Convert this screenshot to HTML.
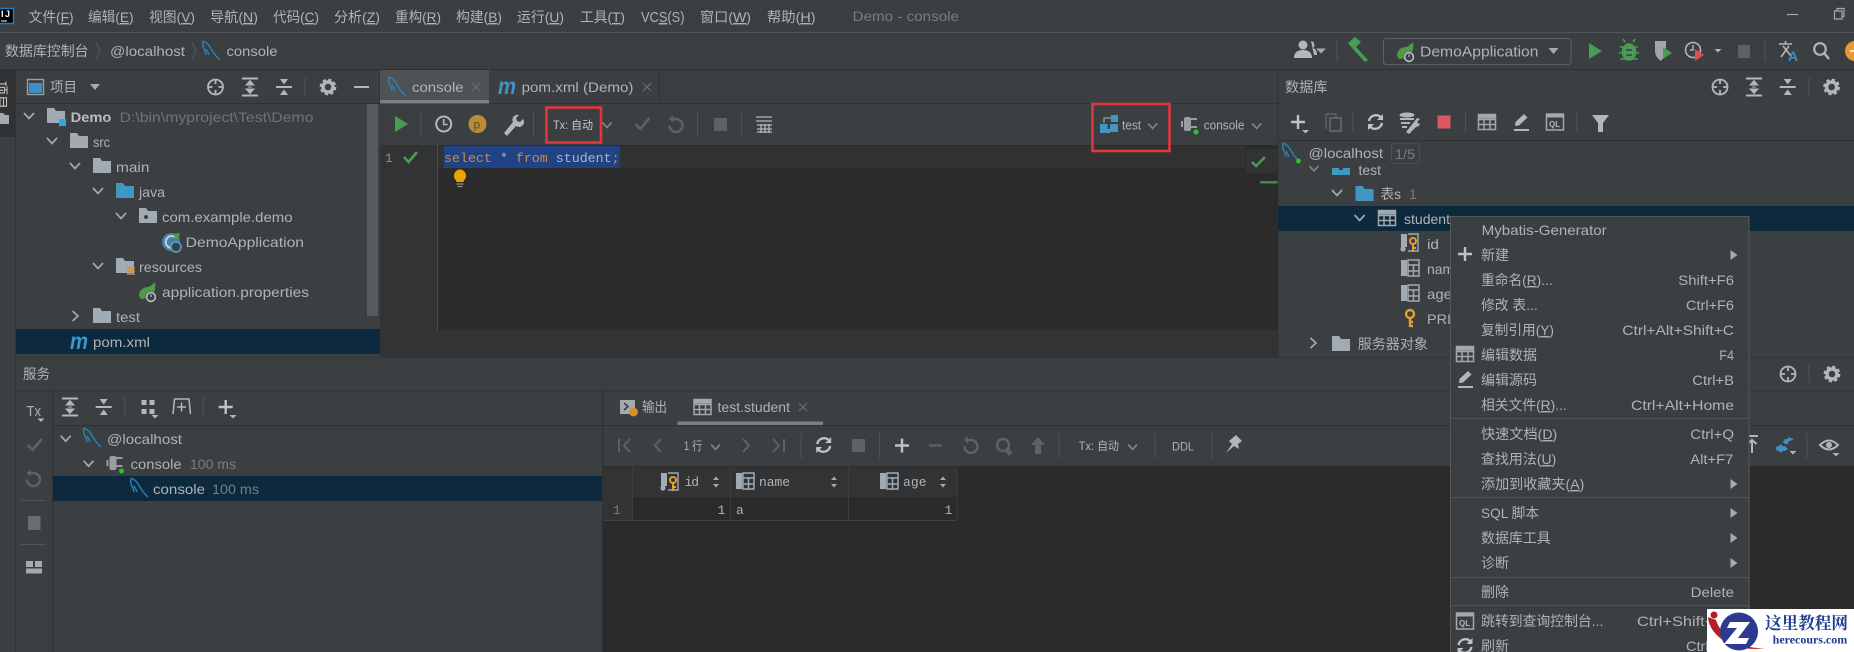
<!DOCTYPE html>
<html><head><meta charset="utf-8"><title>Demo - console</title>
<style>
html,body{margin:0;padding:0;background:#3c3f41;width:1854px;height:652px;overflow:hidden}
svg{display:block}
text{font-family:"Liberation Sans","Noto Sans CJK SC",sans-serif;font-size:14px;fill:#b0b3b5;white-space:pre}
.mono{font-family:"Liberation Mono","DejaVu Sans Mono",monospace}
.g{fill:#7a7d7f}
.u{text-decoration:underline}
.ln{stroke:#2f3133;stroke-width:1}
.sep{stroke:#515456;stroke-width:1}
</style></head><body>
<svg width="1854" height="652" viewBox="0 0 1854 652" xmlns="http://www.w3.org/2000/svg">
<defs>
<g id="chd"><path d="M-5,-3 L0,2.5 L5,-3" fill="none" stroke="#a7aaac" stroke-width="1.7"/></g>
<g id="chdim"><path d="M-4.5,-2.5 L0,2.5 L4.5,-2.5" fill="none" stroke="#7f8284" stroke-width="1.7"/></g>
<g id="chr"><path d="M-2.5,-5 L3,0 L-2.5,5" fill="none" stroke="#a7aaac" stroke-width="1.7"/></g>
<g id="fold"><path d="M-9,-8 h7 l2,3 h9 v12 h-18z" fill="#a0abb3"/></g>
<g id="foldb"><path d="M-9,-8 h7 l2,3 h9 v12 h-18z" fill="#3f97c2"/></g>
<g id="dol"><path d="M-8,-10 C-6,-9 -3,-8 -1,-4 C1,-1 2,2 6,6 L9,9 M-8,-10 C-9,-6 -8,-3 -6,0 L-5,4 M-5,-2 C-4,0 -3,1 -2,4" fill="none" stroke="#2c82b4" stroke-width="1.4"/></g>
<g id="target"><circle r="7.5" fill="none" stroke="#b4b7b9" stroke-width="1.8"/><path d="M0,-8 v5 M0,3 v5 M-8,0 h5 M3,0 h5" stroke="#b4b7b9" stroke-width="1.8"/></g>
<g id="expand"><path d="M-8,-8.5 h16 M-8,8.5 h16" stroke="#b4b7b9" stroke-width="2"/><path d="M0,-6.5 l-4,4.5 h8z M0,6.5 l-4,-4.5 h8z M-2,0 h4" fill="#b4b7b9" stroke="#b4b7b9"/></g>
<g id="collapse"><path d="M-8,0 h16" stroke="#b4b7b9" stroke-width="2"/><path d="M-4,-8 h8 l-4,5.5z M-4,8 h8 l-4,-5.5z" fill="#b4b7b9"/></g>
<g id="gear"><circle r="5" fill="none" stroke="#b4b7b9" stroke-width="3.4"/><circle r="7.2" fill="none" stroke="#b4b7b9" stroke-width="2.4" stroke-dasharray="3.2 2.45"/></g>
<g id="tbl"><path d="M-8.5,-7.5 h17 v15 h-17z M-8.5,-2.5 h17 M-8.5,2.5 h17 M-3,-2.5 v10 M3,-2.5 v10" fill="none" stroke="#a3a8ab" stroke-width="1.5"/><rect x="-8.5" y="-7.5" width="17" height="4" fill="#a3a8ab"/></g>
<g id="col"><rect x="-9" y="-8" width="6" height="16" fill="#a0abb3"/><path d="M-2,-8 h11 v16 h-11z M-2,-3 h11 M-2,3 h11 M3.5,-3 v11" fill="none" stroke="#a0abb3" stroke-width="1.5"/></g>
<g id="key"><circle cx="0" cy="-4" r="4" fill="none" stroke="#e0a030" stroke-width="2.4"/><path d="M0,0 v9 M0,4 h3 M0,8 h3" stroke="#e0a030" stroke-width="2.4"/></g>
<g id="idc"><rect x="-9" y="-9" width="6" height="13" fill="#a0abb3"/><circle cx="-7" cy="6" r="2.6" fill="#a0abb3"/><path d="M-2,-9 h10 v17 h-10" fill="none" stroke="#a0abb3" stroke-width="1.4"/><circle cx="3" cy="-2" r="3" fill="none" stroke="#e0a030" stroke-width="2"/><path d="M3,1 v8 M3,5 h3" stroke="#e0a030" stroke-width="2"/></g>
<g id="plus"><path d="M-7,0 h14 M0,-7 v14" stroke="#c0c3c5" stroke-width="2.4"/></g>
<g id="smtri"><path d="M-3.5,0 h7 l-3.5,3.5z" fill="#b4b7b9"/></g>
<g id="darr"><path d="M-5,-2.5 h10 l-5,5z" fill="#a7aaac"/></g>
<g id="rtri"><path d="M-3,-5 l7,5 l-7,5z" fill="#a7aaac"/></g>
<g id="play"><path d="M-6,-8 L7,0 L-6,8z" fill="#499c54"/></g>
<g id="stop"><rect x="-6" y="-6" width="13" height="13" fill="#5f6264"/></g>
<g id="undo"><path d="M-5,-6 h5 a6.5,6.5 0 1 1 -6.5,6.5" fill="none" stroke="#5f6264" stroke-width="2.4"/><path d="M-7,-6 l4,-3.5 v7z" fill="#5f6264"/></g>
<g id="check"><path d="M-7,0 L-2,5 L7,-6" fill="none" stroke="#5f6264" stroke-width="2.6"/></g>
<g id="refresh"><path d="M6,-4 A7,7 0 0 0 -6.5,-1 M-6,4 A7,7 0 0 0 6.5,1" fill="none" stroke="#c0c3c5" stroke-width="2.4"/><path d="M7.5,-8 v6 h-6z M-7.5,8 v-6 h6z" fill="#c0c3c5"/></g>
<g id="edit"><path d="M-7,8 h15" stroke="#b4b7b9" stroke-width="2"/><path d="M-6,4 L-5.5,0 L3,-8 L6.5,-4.5 L-2,3.5z" fill="#b4b7b9"/></g>
<g id="ql"><rect x="-8.5" y="-8" width="17" height="16" fill="none" stroke="#a3a8ab" stroke-width="1.5"/><rect x="-8.5" y="-8" width="17" height="3.5" fill="#a3a8ab"/><text x="-6" y="5" style="font-size:8px;fill:#b4b7b9;font-weight:bold">QL</text></g>
<g id="spring"><path d="M-9,4 C-9,-3 -3,-5 0,-5 C3,-6 5,-8 7,-10 C8,-3 6,3 1,6 L-7,7z" fill="#4f9a44"/><circle cx="3" cy="5" r="5.5" fill="#3c3f41"/><circle cx="3" cy="5" r="4.4" fill="none" stroke="#b4c0c8" stroke-width="1.6"/><path d="M3,2.5 v2.5" stroke="#b4c0c8" stroke-width="1.2"/></g>
<g id="conn"><path d="M-8,-3 v6" stroke="#9a9ea1" stroke-width="2"/><rect x="-6" y="-7" width="7" height="14" rx="2" fill="#9a9ea1"/><path d="M1,-5 h6 M1,3 h6" stroke="#9a9ea1" stroke-width="2"/><circle cx="6" cy="8" r="2.5" fill="#2fc22f"/></g>
<g id="mvn"><text x="-9" y="7" style="font:italic bold 23px 'Liberation Sans';fill:#3d96c8" textLength="18" lengthAdjust="spacingAndGlyphs">m</text></g>
</defs>

<rect width="1854" height="652" fill="#3c3f41"/>

<!-- top menu bar -->
<path d="M0,32.5 H1854" stroke="#525557"/>
<rect x="0" y="8" width="14" height="16" fill="#000"/><path d="M0,8.5 H13.5 V23.5 H0" fill="none" stroke="#1e7ec8" stroke-width="1.4"/>
<text x="1" y="17" style="font-size:9px;font-weight:bold;fill:#fff" textLength="9">IJ</text><path d="M1,21 h6" stroke="#fff"/>
<text x="28.6" y="22" textLength="45" lengthAdjust="spacingAndGlyphs">文件(<tspan class="u">F</tspan>)</text>
<text x="88" y="22" textLength="45.5" lengthAdjust="spacingAndGlyphs">编辑(<tspan class="u">E</tspan>)</text>
<text x="149" y="22" textLength="46" lengthAdjust="spacingAndGlyphs">视图(<tspan class="u">V</tspan>)</text>
<text x="210" y="22" textLength="48" lengthAdjust="spacingAndGlyphs">导航(<tspan class="u">N</tspan>)</text>
<text x="273" y="22" textLength="46" lengthAdjust="spacingAndGlyphs">代码(<tspan class="u">C</tspan>)</text>
<text x="334" y="22" textLength="46" lengthAdjust="spacingAndGlyphs">分析(<tspan class="u">Z</tspan>)</text>
<text x="395" y="22" textLength="46" lengthAdjust="spacingAndGlyphs">重构(<tspan class="u">R</tspan>)</text>
<text x="456" y="22" textLength="46" lengthAdjust="spacingAndGlyphs">构建(<tspan class="u">B</tspan>)</text>
<text x="517" y="22" textLength="47" lengthAdjust="spacingAndGlyphs">运行(<tspan class="u">U</tspan>)</text>
<text x="580" y="22" textLength="45" lengthAdjust="spacingAndGlyphs">工具(<tspan class="u">T</tspan>)</text>
<text x="641" y="22" textLength="43.5" lengthAdjust="spacingAndGlyphs" style="font-size:15px">VC<tspan class="u">S</tspan>(S)</text>
<text x="700" y="22" textLength="51" lengthAdjust="spacingAndGlyphs">窗口(<tspan class="u">W</tspan>)</text>
<text x="767" y="22" textLength="48.5" lengthAdjust="spacingAndGlyphs">帮助(<tspan class="u">H</tspan>)</text>
<text x="852.6" y="21" class="g" textLength="106.4" lengthAdjust="spacingAndGlyphs">Demo - console</text>
<path d="M1787,14.5 h11" stroke="#a7aaac" stroke-width="1.2"/>
<path d="M1834.5,11 h7.5 v8 h-7.5z M1837,11 v-2.5 h7 v8 h-2" fill="none" stroke="#a7aaac" stroke-width="1.2"/>

<!-- breadcrumb bar -->
<path d="M0,69.5 H1854" stroke="#2f3133"/>
<text x="5" y="56" textLength="83.6" lengthAdjust="spacingAndGlyphs">数据库控制台</text>
<path d="M96,42 L100,51 L96,60" fill="none" stroke="#56595b"/>
<text x="110" y="56" textLength="75" lengthAdjust="spacingAndGlyphs">@localhost</text>
<path d="M192,42 L196,51 L192,60" fill="none" stroke="#56595b"/>
<use href="#dol" x="211" y="51"/>
<text x="226.5" y="56" textLength="51" lengthAdjust="spacingAndGlyphs">console</text>

<!-- top right toolbar -->
<g fill="#b4b7b9"><circle cx="1303" cy="45" r="4.5"/><path d="M1294,58 c0,-6 4,-8 9,-8 s9,2 9,8z"/><path d="M1311,41 a4,4 0 0 1 2,7 c3,1 4,4 4,7 h-3"/></g>
<use href="#darr" x="1321" y="51"/>
<path class="sep" d="M1337,40 V62"/>
<path d="M1348,43 L1355,37 L1361,42 L1356,47 L1368,60 L1365,62 L1353,49z" fill="#499c54"/>
<rect x="1383.5" y="38.5" width="187.5" height="26" rx="3" fill="none" stroke="#5e6163"/>
<use href="#spring" x="1406" y="52"/>
<text x="1420" y="56.5" textLength="118.5" lengthAdjust="spacingAndGlyphs" style="font-size:15px">DemoApplication</text>
<path d="M1548.5,48 h10 l-5,6z" fill="#a7aaac"/>
<use href="#play" x="1595" y="51"/>
<g stroke="#499c54" stroke-width="1.6"><ellipse cx="1629" cy="52" rx="6.5" ry="8" fill="#499c54"/><path d="M1620,47 h18 M1619,53 h20 M1620,59 h18 M1625,42 l-2,-3 M1633,42 l2,-3" fill="none"/><path d="M1626,50 h6 M1626,55 h6" stroke="#3c3f41"/></g>
<path d="M1655,41 h11 v13 l-5,7 q-6,-4 -6,-10z" fill="#a0a5a8"/><path d="M1663,47 l9,6 l-9,6z" fill="#499c54"/>
<circle cx="1693" cy="50" r="7.5" fill="none" stroke="#b4b7b9" stroke-width="1.6"/><path d="M1693,45 v5 h-3" fill="none" stroke="#b4b7b9" stroke-width="1.4"/><path d="M1695,49 l9,6 l-9,6z" fill="#d9504f"/>
<use href="#smtri" x="1718" y="49"/>
<rect x="1738" y="45" width="12" height="13" fill="#5f6264"/>
<path class="sep" d="M1765,40 V62"/>
<path d="M1779,44 h13 M1785.5,41 v3 M1781,57 L1789,46 M1783,46 L1791,56" fill="none" stroke="#b4b7b9" stroke-width="1.6"/>
<text x="1788" y="61" style="font-size:14px;font-weight:bold;fill:#3d8ec2">A</text>
<circle cx="1820" cy="49" r="5.8" fill="none" stroke="#b4b7b9" stroke-width="2.2"/><path d="M1824.5,53.5 L1829,59" stroke="#b4b7b9" stroke-width="2.4"/>
<circle cx="1855" cy="51" r="10" fill="#e9982b"/><path d="M1850,51 h5" stroke="#fff" stroke-width="1.5"/>

<!-- left strip -->
<rect x="0" y="70" width="15" height="582" fill="#3c3f41"/>
<rect x="0" y="70" width="15" height="67" fill="#303234"/>
<path d="M15.5,70 V652" stroke="#323436"/>
<text transform="translate(-4,81) rotate(90)" x="0" y="0" style="font-size:14px;fill:#c4c7c9" textLength="28">项目</text>
<path d="M0,113 h3 l2,2 h4 v9 h-9z" fill="#a0abb3"/>

<!-- project panel -->
<path d="M16,103.5 H380" class="ln"/>
<rect x="27.5" y="79.5" width="16" height="15" fill="none" stroke="#9aa0a4" stroke-width="1.4"/><rect x="29" y="83" width="13" height="10" fill="#3d8ec2"/>
<text x="50" y="92" textLength="27" lengthAdjust="spacingAndGlyphs">项目</text>
<path d="M90,84 h10 l-5,6z" fill="#a7aaac"/>
<use href="#target" x="215.5" y="87"/><use href="#expand" x="250" y="87"/><use href="#collapse" x="284" y="87"/>
<path class="sep" d="M305,78 V96"/>
<use href="#gear" x="328" y="87"/>
<path d="M354,87 h15" stroke="#b4b7b9" stroke-width="2"/>

<!-- project tree -->
<rect x="16" y="329" width="364" height="25" fill="#0d293e"/>
<rect x="367" y="104" width="11" height="212" fill="#585b5d"/>
<use href="#chd" x="29" y="116"/><use href="#chd" x="52" y="141"/><use href="#chd" x="75" y="166"/><use href="#chd" x="98" y="191"/><use href="#chd" x="121" y="216"/><use href="#chd" x="98" y="266"/><use href="#chr" x="75" y="316"/>
<use href="#fold" x="56" y="116"/><rect x="59" y="119" width="7" height="7" fill="#2fa8e0"/>
<use href="#fold" x="79" y="141"/><use href="#fold" x="102" y="166"/><use href="#foldb" x="125" y="191"/>
<use href="#fold" x="148" y="216"/><circle cx="146" cy="217" r="2" fill="#3c3f41"/>
<circle cx="171" cy="242" r="9" fill="#3f83ad"/><path d="M175,237 a6,6 0 1 0 0,10" fill="none" stroke="#ccc" stroke-width="2"/><path d="M172,234 l8,-1 l-2,7z" fill="#4f9a44"/><circle cx="176" cy="247" r="5" fill="#3c3f41" stroke="#4da3cf" stroke-width="1.5"/>
<use href="#fold" x="125" y="266"/><path d="M127,268 h8 M127,271 h8 M127,274 h8" stroke="#d88e24" stroke-width="1.6"/>
<use href="#spring" x="148" y="292"/>
<use href="#fold" x="102" y="316"/>
<use href="#mvn" x="79" y="342"/>
<text x="70.6" y="122" style="font-weight:bold;fill:#bbb" textLength="40.8" lengthAdjust="spacingAndGlyphs">Demo</text>
<text x="119.6" y="122" class="g" fill-opacity=".85" textLength="193.9" lengthAdjust="spacingAndGlyphs">D:\bin\myproject\Test\Demo</text>
<text x="93" y="147" textLength="17" lengthAdjust="spacingAndGlyphs">src</text>
<text x="116" y="172" textLength="33.4" lengthAdjust="spacingAndGlyphs">main</text>
<text x="139" y="197" textLength="26" lengthAdjust="spacingAndGlyphs">java</text>
<text x="162" y="222" textLength="130.6" lengthAdjust="spacingAndGlyphs">com.example.demo</text>
<text x="185.7" y="247" textLength="118.3" lengthAdjust="spacingAndGlyphs">DemoApplication</text>
<text x="139" y="272" textLength="63" lengthAdjust="spacingAndGlyphs">resources</text>
<text x="162" y="297" textLength="147" lengthAdjust="spacingAndGlyphs">application.properties</text>
<text x="116" y="322" textLength="24" lengthAdjust="spacingAndGlyphs">test</text>
<text x="93" y="347" textLength="57" lengthAdjust="spacingAndGlyphs">pom.xml</text>

<!-- editor tabs -->
<path d="M380,70 V103" class="ln"/>
<path d="M380,103.5 H1278" class="ln"/>
<rect x="380" y="70" width="109" height="33" fill="#4e5254"/>
<rect x="380" y="100" width="109" height="3.5" fill="#7d8082"/>
<use href="#dol" x="397" y="87"/>
<text x="412" y="92" textLength="51.6" lengthAdjust="spacingAndGlyphs">console</text>
<path d="M472,83 l8,8 M480,83 l-8,8" stroke="#6b6e70" stroke-width="1.2"/>
<use href="#mvn" x="507" y="87"/>
<text x="521.6" y="92" textLength="111.9" lengthAdjust="spacingAndGlyphs">pom.xml (Demo)</text>
<path d="M643,83 l8,8 M651,83 l-8,8" stroke="#6b6e70" stroke-width="1.2"/>
<path d="M659.5,70 V103" class="ln"/>

<!-- editor toolbar -->
<use href="#play" x="401" y="124"/>
<path class="sep" d="M421,112 V137"/>
<circle cx="443.7" cy="124" r="7.5" fill="none" stroke="#b4b7b9" stroke-width="2"/><path d="M443.7,119 v5.5 h4" fill="none" stroke="#b4b7b9" stroke-width="1.6"/>
<circle cx="477.5" cy="124" r="9" fill="#b98b3a"/><text x="473.5" y="128.5" style="font-size:12px;fill:#5a4a26" textLength="8">p</text>
<path d="M504,133 L513,122 a5,5 0 0 1 6,-7 l-3,3 l1,3 l3,1 l3,-3 a5,5 0 0 1 -7,7 L507,136z" fill="#b4b7b9"/>
<path class="sep" d="M533.5,112 V137"/>
<text x="553" y="129" style="font-size:11.5px;fill:#c4c7c9" textLength="40" lengthAdjust="spacingAndGlyphs">Tx: 自动</text>
<use href="#chdim" x="607" y="125"/>
<use href="#check" x="642.4" y="124"/>
<use href="#undo" x="676" y="125"/>
<path class="sep" d="M697.5,112 V137"/>
<use href="#stop" x="720" y="124"/>
<path class="sep" d="M741.6,112 V137"/>
<path d="M756,117 h16 M756,121 h16 M757,125 h15 M757,129 h15 M757,132 h15 M761,124 v9 M765,124 v9 M769,124 v9" stroke="#b4b7b9" stroke-width="1.3" fill="none"/>
<rect x="1100" y="124" width="7.5" height="7.5" fill="#3f97c2"/><rect x="1110" y="124" width="8" height="8" fill="#3f97c2"/><rect x="1111" y="115" width="7" height="7" fill="#3f97c2"/><rect x="1100" y="129" width="10" height="4" fill="#3f97c2"/><path d="M1104,123 v-5 h7" fill="none" stroke="#b4b7b9"/>
<text x="1122" y="129.5" style="font-size:13px" textLength="19" lengthAdjust="spacingAndGlyphs">test</text>
<use href="#chdim" x="1152.6" y="126"/>
<use href="#conn" x="1190" y="124"/>
<text x="1203.7" y="129.5" style="font-size:13px" textLength="40.8" lengthAdjust="spacingAndGlyphs">console</text>
<use href="#chdim" x="1256.7" y="126"/>

<!-- editor -->
<rect x="380" y="145" width="898" height="185" fill="#2b2b2b"/>
<rect x="380" y="145" width="57" height="185" fill="#313335"/>
<path d="M437.5,145 V330" stroke="#4a4d4f"/>
<rect x="438" y="146" width="807" height="22" fill="#323232"/>
<rect x="444" y="146" width="175.6" height="22" fill="#214283"/>
<text x="385" y="162" class="mono" style="font-size:12.5px;fill:#8d9193">1</text>
<path d="M404,157 L408.5,162 L417,152" fill="none" stroke="#499c54" stroke-width="2.6"/>
<text x="444" y="162" class="mono" style="font-size:13.3px" textLength="175.6" lengthAdjust="spacingAndGlyphs"><tspan style="fill:#cc8a4a">select</tspan> <tspan style="fill:#a9b7c6">*</tspan> <tspan style="fill:#cc8a4a">from</tspan> <tspan style="fill:#a9b7c6">student</tspan><tspan style="fill:#cc8a4a">;</tspan></text>
<path d="M454,176 a6,6.5 0 1 1 12,0 c0,3 -2,3.5 -2.5,6 h-7 c-.5,-2.5 -2.5,-3 -2.5,-6z" fill="#eda200"/><path d="M456.5,184 h7 M457.5,186.5 h5" stroke="#9c8f7a" stroke-width="1.3"/>
<rect x="1245" y="146" width="33" height="184" fill="#2b2b2b"/>
<rect x="1246" y="149" width="32" height="24" fill="#313335"/>
<path d="M1252,162 L1256,166 L1265,157" fill="none" stroke="#499c54" stroke-width="2.4"/>
<rect x="1260" y="181" width="18" height="2.5" fill="#3a8f3f"/>
<rect x="380" y="330" width="898" height="27" fill="#313335"/>
<path d="M16,357.5 H1854" stroke="#323436"/>

<!-- red annotation boxes -->
<rect x="546.5" y="107.5" width="54.5" height="35" fill="none" stroke="#e2363f" stroke-width="2.6"/>
<rect x="1092.5" y="104" width="77" height="47" fill="none" stroke="#e2363f" stroke-width="2.6"/>

<!-- database panel -->
<path d="M1278,70 V357" class="ln"/>
<text x="1285" y="92" textLength="42.5" lengthAdjust="spacingAndGlyphs">数据库</text>
<use href="#target" x="1720" y="87"/><use href="#expand" x="1754" y="87"/><use href="#collapse" x="1787.7" y="87"/>
<path class="sep" d="M1809,78 V96"/>
<use href="#gear" x="1831.6" y="87"/>
<path d="M1278,140.5 H1854" class="ln"/>
<use href="#plus" x="1298" y="122"/><use href="#smtri" x="1305.5" y="130"/>
<path d="M1326,114 h10 v3 M1326,114 v15" fill="none" stroke="#5f6264" stroke-width="1.5"/><rect x="1330" y="118" width="11" height="13" fill="none" stroke="#5f6264" stroke-width="2"/>
<path class="sep" d="M1353,112 V133"/>
<use href="#refresh" x="1375.5" y="122"/>
<ellipse cx="1407" cy="115" rx="7.5" ry="2.5" fill="#b4b7b9"/><path d="M1400,119 h14 M1401,123 h9 M1402,127 h5" stroke="#b4b7b9" stroke-width="2"/><path d="M1406,132 L1414,122 l3,-4 l3,1 l-3,3 l2,2 l1,-1 l-1,3 l-3,1 L1409,134z" fill="#b4b7b9"/>
<rect x="1437.5" y="115.5" width="13" height="13" fill="#db5860"/>
<path class="sep" d="M1465.5,112 V133"/>
<use href="#tbl" x="1487" y="122"/>
<use href="#edit" x="1521" y="122"/>
<use href="#ql" x="1555" y="122"/>
<path class="sep" d="M1577,112 V133"/>
<path d="M1592,115 h17 l-6,8 v9 h-5 v-9z" fill="#b4b7b9"/>

<!-- database tree -->
<rect x="1278" y="206" width="576" height="25" fill="#0d293e"/>
<use href="#chdim" x="1314" y="168.5"/><path d="M1332,168 h7 v2 h4 v-2 h7 v7 h-18z" fill="#3f97c2"/>
<text x="1358.5" y="175" textLength="22.5" lengthAdjust="spacingAndGlyphs">test</text>
<rect x="1279" y="141" width="575" height="24.5" fill="#3c3f41"/>
<path d="M1278,141 V166" class="ln"/>
<use href="#dol" x="1291" y="153"/><circle cx="1298.5" cy="161" r="2.4" fill="#2fc22f"/>
<text x="1308.5" y="158" textLength="74.5" lengthAdjust="spacingAndGlyphs">@localhost</text>
<rect x="1391.5" y="143.5" width="28" height="20" rx="3" fill="none" stroke="#4d5052"/>
<text x="1395" y="159" class="g" textLength="20" lengthAdjust="spacingAndGlyphs">1/5</text>
<use href="#chd" x="1337" y="193"/><use href="#foldb" x="1364.5" y="194"/>
<text x="1380.5" y="199" textLength="20.5" lengthAdjust="spacingAndGlyphs">表s</text>
<text x="1409" y="199" class="g">1</text>
<use href="#chd" x="1359.6" y="218"/><use href="#tbl" x="1387" y="218"/>
<text x="1404" y="224" textLength="46" lengthAdjust="spacingAndGlyphs">student</text>
<use href="#idc" x="1410" y="243"/><text x="1427" y="249" textLength="12" lengthAdjust="spacingAndGlyphs">id</text>
<use href="#col" x="1410" y="268"/><text x="1427" y="274" textLength="35" lengthAdjust="spacingAndGlyphs">name</text>
<use href="#col" x="1410" y="293"/><text x="1427" y="299" textLength="25" lengthAdjust="spacingAndGlyphs">age</text>
<use href="#key" x="1410" y="318"/><text x="1427" y="324" textLength="24" lengthAdjust="spacingAndGlyphs">PRI</text>
<use href="#chr" x="1313" y="343"/><use href="#fold" x="1341" y="344"/>
<text x="1357.7" y="349" textLength="70.3" lengthAdjust="spacingAndGlyphs">服务器对象</text>

<!-- services panel -->
<text x="23" y="379" textLength="27" lengthAdjust="spacingAndGlyphs">服务</text>
<path d="M16,391 H1854" class="ln"/>
<use href="#target" x="1788" y="374"/>
<path class="sep" d="M1809,365 V383"/>
<use href="#gear" x="1832" y="374"/>

<path d="M52.5,391 V652" class="ln"/>
<text x="26.5" y="416" textLength="14.5" lengthAdjust="spacingAndGlyphs" style="font-size:15px">Tx</text>
<use href="#smtri" x="41" y="418.5"/>
<use href="#check" x="34.7" y="445"/>
<use href="#undo" x="33.5" y="479"/>
<path class="sep" d="M21,500.5 H46"/>
<rect x="28" y="516" width="12.5" height="14" fill="#6a6d6f"/>
<path class="sep" d="M21,544.5 H46"/>
<path d="M26,561 h7 v6 h-7z M35,561 h7 v6 h-7z M26,568.5 h16 v5 h-16z" fill="#a7aaac"/>

<path d="M53,425.5 H602" class="ln"/>
<use href="#expand" x="70" y="407"/><use href="#collapse" x="103.7" y="407"/>
<path class="sep" d="M125,397 V417"/>
<path d="M141.5,400 h5 v5 h-5z M149.5,400 h5 v5 h-5z M141.5,409 h5 v5 h-5z M149.5,409 h5 v5 h-5z" fill="#b4b7b9"/><use href="#smtri" x="155" y="415"/>
<path d="M173,414 L174.5,399 H189 L190.5,414" fill="none" stroke="#b4b7b9" stroke-width="1.5"/><path d="M177,407 h9 M181.5,402.5 v9" stroke="#b4b7b9" stroke-width="1.5"/>
<path class="sep" d="M203,397 V417"/>
<use href="#plus" x="225.7" y="407"/><use href="#smtri" x="233" y="415"/>

<rect x="53" y="476" width="549" height="25" fill="#0d293e"/>
<use href="#chd" x="65.7" y="438.7"/><use href="#dol" x="92" y="438"/>
<text x="107" y="444" textLength="75" lengthAdjust="spacingAndGlyphs">@localhost</text>
<use href="#chd" x="88.6" y="463.7"/><use href="#conn" x="115.5" y="463"/>
<text x="130.6" y="469" textLength="51" lengthAdjust="spacingAndGlyphs">console</text>
<text x="190" y="469" class="g" textLength="46" lengthAdjust="spacingAndGlyphs">100 ms</text>
<use href="#dol" x="139" y="488"/>
<text x="153" y="494" textLength="52" lengthAdjust="spacingAndGlyphs">console</text>
<text x="212" y="494" class="g" textLength="47" lengthAdjust="spacingAndGlyphs">100 ms</text>

<!-- results pane -->
<path d="M602.5,391 V652" class="ln"/>
<path d="M603,425.5 H1854" class="ln"/>
<rect x="620" y="400" width="15" height="14" fill="#a7aaac"/><path d="M624,403 l4,3.5 l-4,3.5" fill="none" stroke="#3c3f41" stroke-width="1.6"/><circle cx="633.5" cy="412" r="4.4" fill="#d6902a"/>
<text x="642" y="412" textLength="25" lengthAdjust="spacingAndGlyphs">输出</text>
<use href="#tbl" x="702.5" y="407"/>
<text x="717.5" y="412" textLength="72.5" lengthAdjust="spacingAndGlyphs">test.student</text>
<path d="M799,403 l8,8 M807,403 l-8,8" stroke="#6b6e70" stroke-width="1.2"/>
<rect x="677.5" y="421.5" width="145.5" height="3.5" fill="#7d8082"/>

<path d="M619,439 v13 M630,439 l-6,6.5 l6,6.5" fill="none" stroke="#5f6264" stroke-width="2"/>
<path d="M661,439 l-6,6.5 l6,6.5" fill="none" stroke="#5f6264" stroke-width="2"/>
<text x="683.7" y="450" style="font-size:12px" textLength="18.5" lengthAdjust="spacingAndGlyphs">1 行</text>
<use href="#chdim" x="715.5" y="447"/>
<path d="M743,439 l6,6.5 l-6,6.5" fill="none" stroke="#5f6264" stroke-width="2"/>
<path d="M773,439 l6,6.5 l-6,6.5 M784,439 v13" fill="none" stroke="#5f6264" stroke-width="2"/>
<path class="sep" d="M801,433 V458"/>
<use href="#refresh" x="823.7" y="445"/>
<use href="#stop" x="858" y="445"/>
<path class="sep" d="M879.6,433 V458"/>
<use href="#plus" x="902" y="445.5"/>
<path d="M929,445.5 h13" stroke="#5f6264" stroke-width="2.4"/>
<use href="#undo" x="971" y="446"/>
<circle cx="1003" cy="445" r="6" fill="none" stroke="#5f6264" stroke-width="2.4"/><path d="M1006,448 l4,-1 v4 h3 l-4,5 l-4,-5z" fill="#5f6264"/>
<path d="M1038,437 l7,8 h-4 v9 h-6 v-9 h-4z" fill="#5f6264"/>
<path class="sep" d="M1059,433 V458"/>
<text x="1078.8" y="450" style="font-size:12px" textLength="40.2" lengthAdjust="spacingAndGlyphs">Tx: 自动</text>
<use href="#chdim" x="1132.6" y="447"/>
<path class="sep" d="M1155,433 V458"/>
<text x="1172" y="450.5" style="font-size:12px" textLength="22" lengthAdjust="spacingAndGlyphs">DDL</text>
<path class="sep" d="M1212,433 V458"/>
<path d="M1226,453 L1232,444 L1229,441 L1236,435 L1242,441 L1238,444 L1239,449 L1234,446z" fill="#b4b7b9"/>
<path d="M1746,436 h12 M1752,440 v13 M1747.5,444 l4.5,-4 l4.5,4" fill="none" stroke="#b4b7b9" stroke-width="2"/>
<path d="M1776,447 l6,-3 v2 h3 l3,3 l-3,2 h-3 v2 l-6,-3z M1794,439 l-6,3 v2 h-3 l-2,-2 l2,-3 h3 v-2z" fill="#3d8ec2"/><use href="#smtri" x="1793" y="451"/>
<path class="sep" d="M1807,433 V458"/>
<path d="M1820,445 q9,-9 18,0 q-9,9 -18,0z" fill="none" stroke="#b4b7b9" stroke-width="2"/><circle cx="1829" cy="445" r="3" fill="#b4b7b9"/><use href="#smtri" x="1836" y="453"/>

<rect x="603" y="466" width="1251" height="186" fill="#2b2b2b"/>
<rect x="603" y="467" width="354" height="30" fill="#313335"/>
<rect x="603" y="497" width="29" height="23" fill="#313335"/>
<path d="M632.5,467 V520 M730.5,467 V520 M848.5,467 V520 M957,467 V520" stroke="#3a3c3e"/>
<path d="M603,520.5 H957" stroke="#3f4143"/>
<use href="#idc" x="670" y="482"/>
<text x="684.5" y="486" class="mono" style="font-size:13px" textLength="14.5">id</text>
<path d="M713,480 l3,-3.5 l3,3.5z M713,484 l3,3.5 l3,-3.5z" fill="#a7aaac"/>
<use href="#col" x="745" y="481"/>
<text x="759" y="486" class="mono" style="font-size:13px" textLength="31">name</text>
<path d="M831,480 l3,-3.5 l3,3.5z M831,484 l3,3.5 l3,-3.5z" fill="#a7aaac"/>
<use href="#col" x="889" y="481"/>
<text x="903" y="486" class="mono" style="font-size:13px" textLength="23.5">age</text>
<path d="M940,480 l3,-3.5 l3,3.5z M940,484 l3,3.5 l3,-3.5z" fill="#a7aaac"/>
<text x="613" y="514" class="mono g" style="font-size:13px">1</text>
<text x="717.5" y="514" class="mono" style="font-size:13px">1</text>
<text x="736" y="514" class="mono" style="font-size:13px">a</text>
<text x="944.5" y="514" class="mono" style="font-size:13px">1</text>

<!-- context menu -->
<rect x="1450.5" y="216.5" width="298.5" height="436" fill="#3c3f41" stroke="#55585a"/>
<path d="M1451,418.5 H1749 M1451,497.5 H1749 M1451,577.5 H1749 M1451,605.5 H1749" stroke="#505355"/>
<text x="1481.7" y="235" textLength="125" lengthAdjust="spacingAndGlyphs">Mybatis-Generator</text>
<text x="1481" y="260" textLength="28">新建</text>
<text x="1481" y="285" textLength="71.7" lengthAdjust="spacingAndGlyphs">重命名(<tspan class="u">R</tspan>)...</text>
<text x="1481" y="310" textLength="56.7" lengthAdjust="spacingAndGlyphs">修改 表...</text>
<text x="1481" y="335" textLength="73" lengthAdjust="spacingAndGlyphs">复制引用(<tspan class="u">Y</tspan>)</text>
<text x="1481" y="360" textLength="56">编辑数据</text>
<text x="1481" y="385" textLength="56">编辑源码</text>
<text x="1481" y="410" textLength="85.7" lengthAdjust="spacingAndGlyphs">相关文件(<tspan class="u">R</tspan>)...</text>
<text x="1481" y="439" textLength="76.3" lengthAdjust="spacingAndGlyphs">快速文档(<tspan class="u">D</tspan>)</text>
<text x="1481" y="464" textLength="75.3" lengthAdjust="spacingAndGlyphs">查找用法(<tspan class="u">U</tspan>)</text>
<text x="1481" y="489" textLength="103.3" lengthAdjust="spacingAndGlyphs">添加到收藏夹(<tspan class="u">A</tspan>)</text>
<text x="1481" y="518" textLength="58" lengthAdjust="spacingAndGlyphs">SQL 脚本</text>
<text x="1481" y="543" textLength="69.7" lengthAdjust="spacingAndGlyphs">数据库工具</text>
<text x="1481" y="568" textLength="28">诊断</text>
<text x="1481" y="597" textLength="28">删除</text>
<text x="1481" y="626" textLength="122.3" lengthAdjust="spacingAndGlyphs">跳转到查询控制台...</text>
<text x="1481" y="651" textLength="28">刷新</text>
<text x="1678.3" y="285" textLength="55.7" lengthAdjust="spacingAndGlyphs">Shift+F6</text>
<text x="1686" y="310" textLength="48" lengthAdjust="spacingAndGlyphs">Ctrl+F6</text>
<text x="1622.3" y="335" textLength="111.7" lengthAdjust="spacingAndGlyphs">Ctrl+Alt+Shift+C</text>
<text x="1719.3" y="360" textLength="14.7" lengthAdjust="spacingAndGlyphs">F4</text>
<text x="1692.3" y="385" textLength="41.7" lengthAdjust="spacingAndGlyphs">Ctrl+B</text>
<text x="1631" y="410" textLength="103" lengthAdjust="spacingAndGlyphs">Ctrl+Alt+Home</text>
<text x="1690.3" y="439" textLength="43.7" lengthAdjust="spacingAndGlyphs">Ctrl+Q</text>
<text x="1690.3" y="464" textLength="43" lengthAdjust="spacingAndGlyphs">Alt+F7</text>
<text x="1690.7" y="597" textLength="43.3" lengthAdjust="spacingAndGlyphs">Delete</text>
<text x="1637" y="626" textLength="90" lengthAdjust="spacingAndGlyphs">Ctrl+Shift+Q</text>
<text x="1686" y="651" textLength="48" lengthAdjust="spacingAndGlyphs">Ctrl+F5</text>
<use href="#rtri" x="1733.5" y="255"/><use href="#rtri" x="1733.5" y="484"/><use href="#rtri" x="1733.5" y="513"/><use href="#rtri" x="1733.5" y="538"/><use href="#rtri" x="1733.5" y="563"/>
<use href="#plus" x="1465" y="254"/>
<use href="#tbl" x="1465" y="354"/>
<use href="#edit" x="1465" y="379"/>
<use href="#ql" x="1465" y="621"/>
<use href="#refresh" x="1465" y="646"/>

<!-- watermark -->
<rect x="1707" y="609" width="147" height="43" fill="#fff"/>
<path d="M1708,617 C1709,636 1734,653 1765,648 C1740,649 1722,638 1716,620z" fill="#b3202a"/>
<circle cx="1714" cy="615" r="3.5" fill="#b3202a"/>
<circle cx="1739" cy="631.5" r="19" fill="#2e3a92"/>
<path d="M1730,622 h20 l-12,16 h11 l-3,6 h-22 l13,-16 h-10z" fill="#fff"/>
<text x="1765" y="629" style="font-family:'Noto Serif CJK SC','Liberation Serif',serif;font-weight:bold;font-size:17px;fill:#1d3b8f" textLength="83" lengthAdjust="spacingAndGlyphs">这里教程网</text>
<text x="1772.7" y="643.5" style="font-family:'Liberation Serif',serif;font-weight:bold;font-size:11.5px;fill:#1d3b8f" textLength="74.5" lengthAdjust="spacingAndGlyphs">herecours.com</text>
</svg>
</body></html>
